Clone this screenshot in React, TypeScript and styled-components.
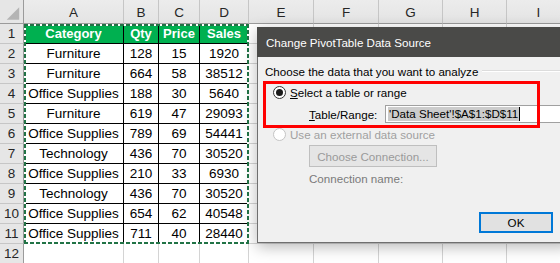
import React from "react";
import styled, { createGlobalStyle } from "styled-components";

const GlobalStyle = createGlobalStyle`
  html, body { margin: 0; padding: 0; background: #ffffff; overflow: hidden; }
  body { width: 560px; height: 263px; font-family: "Liberation Sans", Arial, sans-serif; }
`;

const Screen = styled.div`
  position: relative;
  width: 560px;
  height: 263px;
  overflow: hidden;
  background: #ffffff;
`;

const Sheet = styled.div`
  display: grid;
  grid-template-columns: 24px 100px 35px 41px 49px 65px 65px 64px 64px 64px;
  grid-template-rows: 24px repeat(12, 20px);
  width: 571px;
`;

const Corner = styled.div`
  box-sizing: border-box;
  background: #e6e6e6;
  border-right: 1px solid #9b9b9b;
  border-bottom: 1px solid #9b9b9b;
  display: flex;
`;

const ColHeader = styled.div`
  box-sizing: border-box;
  background: linear-gradient(#ececec, #e4e4e4);
  border-bottom: 1px solid #9b9b9b;
  border-right: 1px solid #c6c6c6;
  display: flex;
  align-items: center;
  justify-content: center;
  padding-top: 2px;
  font-size: 13.5px;
  color: #262626;
`;

const RowHeader = styled.div`
  box-sizing: border-box;
  background: #e6e6e6;
  border-right: 1px solid #9b9b9b;
  border-bottom: 1px solid #c6c6c6;
  display: flex;
  align-items: center;
  justify-content: center;
  font-size: 13.5px;
  color: #262626;
`;

const EmptyCell = styled.div`
  box-sizing: border-box;
  background: #ffffff;
  border-right: 1px solid #d4d4d4;
  border-bottom: 1px solid #d4d4d4;
`;

const DataTable = styled.div`
  grid-column: 2 / 6;
  grid-row: 2 / 13;
  position: relative;
  display: grid;
  grid-template-columns: 100px 35px 41px 49px;
  grid-auto-rows: 20px;

  &::after {
    content: "";
    position: absolute;
    inset: 0;
    pointer-events: none;
    background:
      repeating-linear-gradient(90deg, #217346 0 4px, #ffffff 4px 6px) top left / 100% 2px no-repeat,
      repeating-linear-gradient(90deg, #217346 0 4px, #ffffff 4px 6px) bottom left / 100% 2px no-repeat,
      repeating-linear-gradient(180deg, #217346 0 4px, #ffffff 4px 6px) top left / 2px 100% no-repeat,
      repeating-linear-gradient(180deg, #217346 0 4px, #ffffff 4px 6px) top right / 2px 100% no-repeat;
  }
`;

const DataCell = styled.div<{ $head?: boolean }>`
  box-sizing: border-box;
  border-right: 1px solid #000000;
  border-bottom: 1px solid #000000;
  background: ${(p) => (p.$head ? "#00b050" : "#ffffff")};
  color: ${(p) => (p.$head ? "#ffffff" : "#000000")};
  font-weight: ${(p) => (p.$head ? 700 : 400)};
  font-size: ${(p) => (p.$head ? "13px" : "13.5px")};
  display: flex;
  align-items: center;
  justify-content: center;
  white-space: nowrap;
  overflow: hidden;
`;

const Dialog = styled.div`
  position: absolute;
  left: 257px;
  top: 27px;
  width: 314px;
  height: 216px;
  box-sizing: border-box;
  border: 1px solid #6f6f6f;
  background: #f0f0f0;
  box-shadow: 0 4px 14px rgba(0, 0, 0, 0.28);
  display: flex;
  flex-direction: column;
  font-family: "Liberation Sans", Arial, sans-serif;
  font-size: 11.6px;
  color: #000000;
`;

const TitleBar = styled.div`
  height: 29px;
  margin: -1px -1px 0 -1px;
  padding: 1px 0 0 9px;
  background: #4a4a48;
  color: #ffffff;
  font-size: 11.6px;
  display: flex;
  align-items: center;
`;

const Body = styled.div`
  flex: 1;
  display: flex;
  flex-direction: column;
  padding: 6px 17px 0 7px;
`;

const LegendRow = styled.div`
  height: 16px;
  display: flex;
  align-items: center;
  gap: 4px;
`;

const GrooveLine = styled.div`
  flex: 1;
  height: 0;
  border-top: 1px solid #dcdcdc;
  border-bottom: 1px solid #ffffff;
  margin-right: -30px;
`;

const RadioRow = styled.div<{ $disabled?: boolean; $top: number }>`
  height: 16px;
  margin-top: ${(p) => p.$top}px;
  margin-left: 8px;
  display: flex;
  align-items: center;
  gap: 4px;
  color: ${(p) => (p.$disabled ? "#a0a0a0" : "#000000")};
`;

const Radio = styled.span<{ $checked?: boolean; $disabled?: boolean }>`
  box-sizing: border-box;
  width: 13px;
  height: 13px;
  border-radius: 50%;
  border: 1px solid ${(p) => (p.$disabled ? "#c4c4c4" : "#333333")};
  background: #ffffff;
  display: flex;
  align-items: center;
  justify-content: center;

  &::after {
    content: "";
    display: ${(p) => (p.$checked ? "block" : "none")};
    width: 7px;
    height: 7px;
    border-radius: 50%;
    background: #1a1a1a;
  }
`;

const RangeRow = styled.div`
  height: 18px;
  margin-top: 5px;
  margin-left: 44px;
  display: flex;
  align-items: center;
`;

const RangeLabel = styled.span`
  width: 76px;
  flex: none;
`;

const RangeInput = styled.div`
  box-sizing: border-box;
  width: 200px;
  height: 18px;
  flex: none;
  background: #ffffff;
  border: 1px solid #a0a0a0;
  display: flex;
  align-items: center;
  padding-left: 2px;
  white-space: nowrap;
`;

const Selected = styled.span`
  background: #cccccc;
  padding: 0 1px;
  line-height: 14px;
`;

const Caret = styled.span`
  width: 1px;
  height: 14px;
  background: #000000;
`;

const ConnButton = styled.div`
  box-sizing: border-box;
  margin-top: 3px;
  margin-left: 44px;
  width: 128px;
  height: 22px;
  border: 1px solid #bfbfbf;
  background: #e5e5e5;
  color: #9a9a9a;
  display: flex;
  align-items: center;
  justify-content: center;
`;

const ConnLabel = styled.div`
  margin-top: 3px;
  margin-left: 44px;
  height: 16px;
  display: flex;
  align-items: center;
  color: #7a7a7a;
`;

const Footer = styled.div`
  margin-top: 26px;
  display: flex;
  justify-content: flex-end;
`;

const OkButton = styled.div`
  box-sizing: border-box;
  width: 74px;
  height: 21px;
  border: 2px solid #0078d7;
  background: #e1e1e1;
  display: flex;
  align-items: center;
  justify-content: center;
`;

const Annotation = styled.div`
  position: absolute;
  left: 263px;
  top: 81px;
  width: 277px;
  height: 47px;
  box-sizing: border-box;
  border: 3px solid #ff0000;
  pointer-events: none;
`;

const cols = ["A", "B", "C", "D", "E", "F", "G", "H", "I"];

const data: [string, number, number, number][] = [
  ["Furniture", 128, 15, 1920],
  ["Furniture", 664, 58, 38512],
  ["Office Supplies", 188, 30, 5640],
  ["Furniture", 619, 47, 29093],
  ["Office Supplies", 789, 69, 54441],
  ["Technology", 436, 70, 30520],
  ["Office Supplies", 210, 33, 6930],
  ["Technology", 436, 70, 30520],
  ["Office Supplies", 654, 62, 40548],
  ["Office Supplies", 711, 40, 28440],
];

export default function App() {
  const rows = Array.from({ length: 12 }, (_, i) => i + 1);
  return (
    <Screen>
      <GlobalStyle />
      <Sheet>
        <Corner>
          <svg width="24" height="23" viewBox="0 0 24 23">
            <polygon points="7,20 20,20 20,7" fill="#b4b4b4" />
          </svg>
        </Corner>
        {cols.map((c) => (
          <ColHeader key={c}>{c}</ColHeader>
        ))}
        <DataTable>
          {["Category", "Qty", "Price", "Sales"].map((h) => (
            <DataCell key={h} $head>
              {h}
            </DataCell>
          ))}
          {data.map((r, i) =>
            r.map((v, j) => <DataCell key={`${i}-${j}`}>{v}</DataCell>)
          )}
        </DataTable>
        {rows.map((r) => (
          <React.Fragment key={r}>
            <RowHeader>{r}</RowHeader>
            {r === 12 && [0, 1, 2, 3].map((k) => <EmptyCell key={`a${k}`} />)}
            {[0, 1, 2, 3, 4].map((k) => (
              <EmptyCell key={`e${k}`} />
            ))}
          </React.Fragment>
        ))}
      </Sheet>

      <Dialog>
        <TitleBar>Change PivotTable Data Source</TitleBar>
        <Body>
          <LegendRow>
            <span>Choose the data that you want to analyze</span>
            <GrooveLine />
          </LegendRow>
          <RadioRow $top={5}>
            <Radio $checked />
            <span>
              <u>S</u>elect a table or range
            </span>
          </RadioRow>
          <RangeRow>
            <RangeLabel>
              <u>T</u>able/Range:
            </RangeLabel>
            <RangeInput>
              <Selected>'Data Sheet'!$A$1:$D$11</Selected>
              <Caret />
            </RangeInput>
          </RangeRow>
          <RadioRow $top={3} $disabled>
            <Radio $disabled />
            <span>Use an external data source</span>
          </RadioRow>
          <ConnButton>Choose Connection...</ConnButton>
          <ConnLabel>Connection name:</ConnLabel>
          <Footer>
            <OkButton>OK</OkButton>
          </Footer>
        </Body>
      </Dialog>
      <Annotation />
    </Screen>
  );
}
